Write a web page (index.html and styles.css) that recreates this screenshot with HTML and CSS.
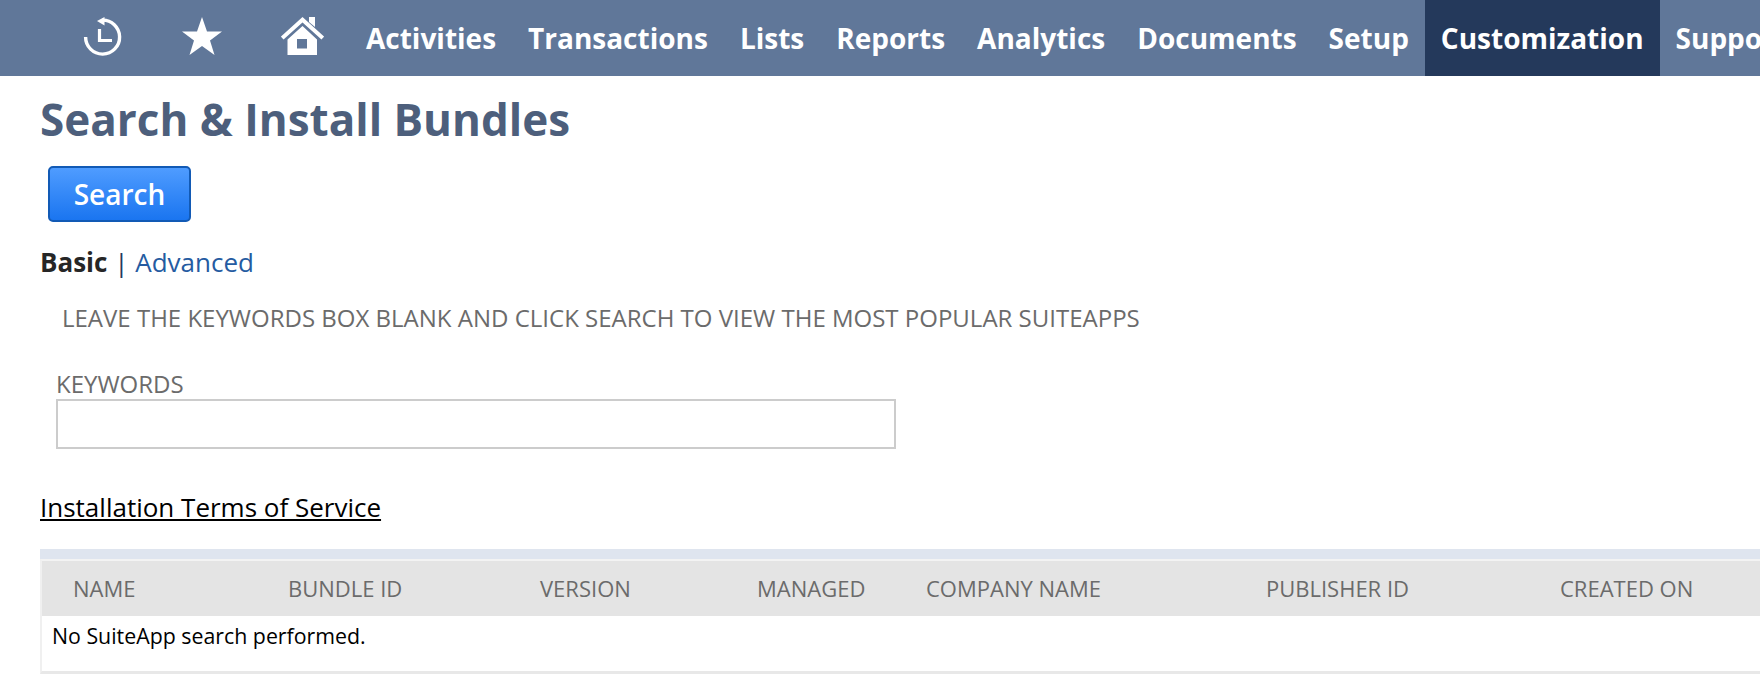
FILE: index.html
```html
<!DOCTYPE html>
<html lang="en">
<head>
<meta charset="utf-8">
<title>Search &amp; Install Bundles</title>
<link rel="stylesheet" href="styles.css">
</head>
<body>
<nav class="nav">
  <a class="nav-icon nav-icon-history" aria-label="Recent">
    <svg width="40" height="40" viewBox="0 0 40 40"><path d="M19 3.100A17 17 0 1 1 2.600 20" fill="none" stroke="#fff" stroke-width="3.400"/><path d="M21.500 0V8.500L14 4z" fill="#fff"/><path d="M16.500 12V23.500H29" fill="none" stroke="#fff" stroke-width="3.200"/></svg>
  </a>
  <a class="nav-icon nav-icon-star" aria-label="Favorites">
    <svg width="40" height="38" viewBox="0 0 40 38"><path d="M20 0l5 14.500h15L28 23.500 32.500 38 20 29 7.500 38 12 23.500 0 14.500h15z" fill="#fff"/></svg>
  </a>
  <a class="nav-icon nav-icon-home" aria-label="Home">
    <svg width="43" height="38" viewBox="0 0 43 38"><path d="M1.200 21L21.500 2.700 41.800 21" fill="none" stroke="#fff" stroke-width="4"/><path d="M28 0h6v10l-6-5z" fill="#fff"/><path fill-rule="evenodd" d="M6.500 22.500L21.500 9 36 22.500V38H6.500zM16 22v9.500h10V22z" fill="#fff"/></svg>
  </a>
  <a class="nav-item">Activities</a>
  <a class="nav-item">Transactions</a>
  <a class="nav-item">Lists</a>
  <a class="nav-item">Reports</a>
  <a class="nav-item">Analytics</a>
  <a class="nav-item">Documents</a>
  <a class="nav-item">Setup</a>
  <a class="nav-item nav-item-active">Customization</a>
  <a class="nav-item">Support</a>
</nav>
<main class="page">
  <h1 class="title">Search &amp; Install Bundles</h1>
  <button class="search-btn" type="button">Search</button>
  <div class="tabs"><span class="tab-current">Basic</span> <span class="tab-sep">|</span> <a class="tab-link">Advanced</a></div>
  <p class="hint">LEAVE THE KEYWORDS BOX BLANK AND CLICK SEARCH TO VIEW THE MOST POPULAR SUITEAPPS</p>
  <label class="field-label" for="kw">KEYWORDS</label>
  <input class="field-input" id="kw" type="text">
  <a class="terms">Installation Terms of Service</a>
  <section class="results">
    <div class="results-band"></div>
    <div class="results-body">
      <div class="results-head">
        <span>NAME</span><span>BUNDLE ID</span><span>VERSION</span><span>MANAGED</span><span>COMPANY NAME</span><span>PUBLISHER ID</span><span>CREATED ON</span>
      </div>
      <div class="results-empty">No SuiteApp search performed.</div>
    </div>
  </section>
</main>
</body>
</html>
```
FILE: styles.css
```css
html, body { margin: 0; padding: 0; overflow: hidden; background: #fff; }
body { width: 1760px; height: 676px; font-family: "Open Sans", sans-serif; }
.nav { display: flex; align-items: stretch; height: 76px; background: #607799; overflow: hidden; white-space: nowrap; }
.nav-icon { display: flex; align-items: flex-start; flex: none; padding-top: 17px; box-sizing: border-box; }
.nav-icon-history { margin-left: 83px; width: 99px; }
.nav-icon-star { width: 99px; }
.nav-icon-home { width: 69px; }
.nav-item { flex: none; padding: 0 16px; font-size: 28px; font-weight: 700; line-height: 76px; color: #fff; }
.nav-item-active { background: #24395b; }
.page { padding: 0 0 0 40px; }
.title { margin: 0; padding-top: 18px; font-size: 44px; line-height: 50px; font-weight: 700; color: #4d5f7c; }
.search-btn { display: block; margin: 22px 0 0 8px; width: 143px; height: 56px; padding: 0; border: 2px solid #125ab5; border-radius: 5px; background: linear-gradient(#4f9cff, #1a75f0); color: #fff; font: 600 28px "Open Sans", sans-serif; }
.tabs { margin-top: 23px; font-size: 26px; line-height: 34px; color: #24395b; }
.tab-current { font-weight: 700; color: #262626; }
.tab-link { color: #255ba1; }
.hint { margin: 22px 0 0 22px; font-size: 24px; line-height: 34px; color: #6b6b6b; }
.field-label { display: block; margin: 33px 0 0 16px; font-size: 24px; line-height: 31px; color: #6b6b6b; }
.field-input { display: block; box-sizing: border-box; margin: 0 0 0 16px; width: 840px; height: 50px; border: 2px solid #ccc; background: #fff; }
.terms { display: inline-block; margin-top: 41px; font-size: 26px; line-height: 34px; color: #000; text-decoration: underline; }
.results { margin-top: 25px; }
.results-band { height: 10px; background: #dfe5ef; }
.results-body { border-left: 2px solid #f0f0f0; border-top: 2px solid #f3f3f3; border-bottom: 3px solid #e8e8e8; }
.results-head { display: grid; grid-template-columns: 215px 252px 217px 169px 340px 294px 1fr; box-sizing: border-box; height: 55px; padding: 0 0 2px 31px; align-items: center; background: #e4e4e4; font-size: 22px; color: #6b6b6b; }
.results-empty { height: 55px; padding-left: 10px; font-size: 21.33px; line-height: 40px; color: #000; background: #fff; }
```
